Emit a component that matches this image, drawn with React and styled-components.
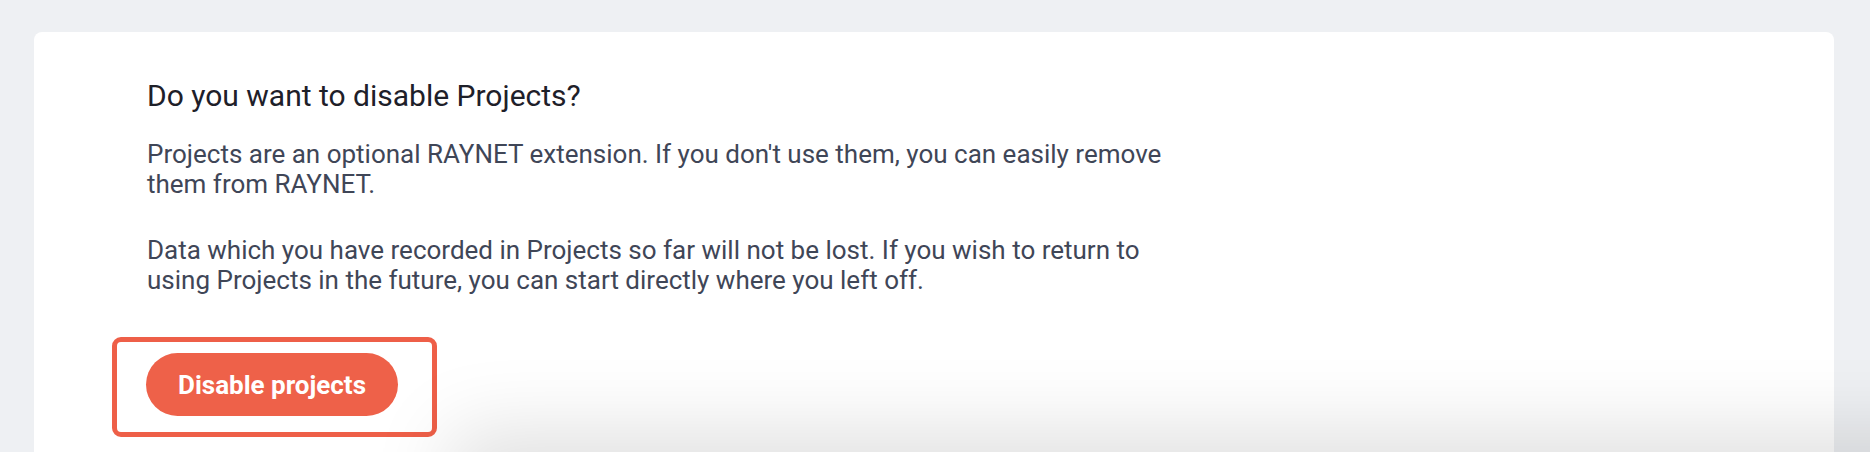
import React from "react";
import styled, { createGlobalStyle } from "styled-components";

const GlobalStyle = createGlobalStyle`
    html, body {
        margin: 0;
        padding: 0;
        height: 100%;
        overflow: hidden;
        background: #eef0f3;
        font-family: Roboto, "Liberation Sans", Arial, sans-serif;
    }
`

const Page = styled.div`
    padding: 32px 36px 0 34px;
    min-height: 452px;
    box-sizing: border-box;
`

const Card = styled.div`
    background: #ffffff;
    border-radius: 8px 8px 0 0;
    min-height: 420px;
    padding: 46px 0 0 113px;
    box-sizing: border-box;
`

const Title = styled.h2`
    margin: 0 0 25px;
    font-size: 30px;
    line-height: 36px;
    font-weight: 400;
    color: #1e2029;
`

const Text = styled.p`
    margin: 0 0 ${props => props.gap || 36}px;
    max-width: 1040px;
    font-size: 26px;
    line-height: 30px;
    color: #3f4657;
`

const Highlight = styled.div`
    display: inline-flex;
    margin: 6px 0 0 -35px;
    padding: 11px 34px 16px 29px;
    border: 5px solid #ee5f48;
    border-radius: 9px;
`

const DangerButton = styled.button`
    height: 63px;
    padding: 0 32px;
    border: none;
    border-radius: 32px;
    background: #ee6149;
    color: #ffffff;
    font-family: inherit;
    font-size: 26px;
    font-weight: 700;
    cursor: pointer;
`

// shadow coming from the footer bar that sits just below the visible area
const FooterShadow = styled.div`
    position: fixed;
    left: 470px;
    right: -120px;
    bottom: -60px;
    height: 60px;
    box-shadow: 0 0 80px 20px rgba(0, 0, 0, 0.13);
    pointer-events: none;
`

const App = () => {
    return (
        <>
            <GlobalStyle />
            <Page>
                <Card>
                    <Title>Do you want to disable Projects?</Title>
                    <Text>
                        Projects are an optional RAYNET extension. If you don't use them, you can easily remove them from RAYNET.
                    </Text>
                    <Text gap={0}>
                        Data which you have recorded in Projects so far will not be lost. If you wish to return to using Projects in the future, you can start directly where you left off.
                    </Text>
                    <Highlight>
                        <DangerButton>Disable projects</DangerButton>
                    </Highlight>
                </Card>
            </Page>
            <FooterShadow />
        </>
    )
}

export default App
